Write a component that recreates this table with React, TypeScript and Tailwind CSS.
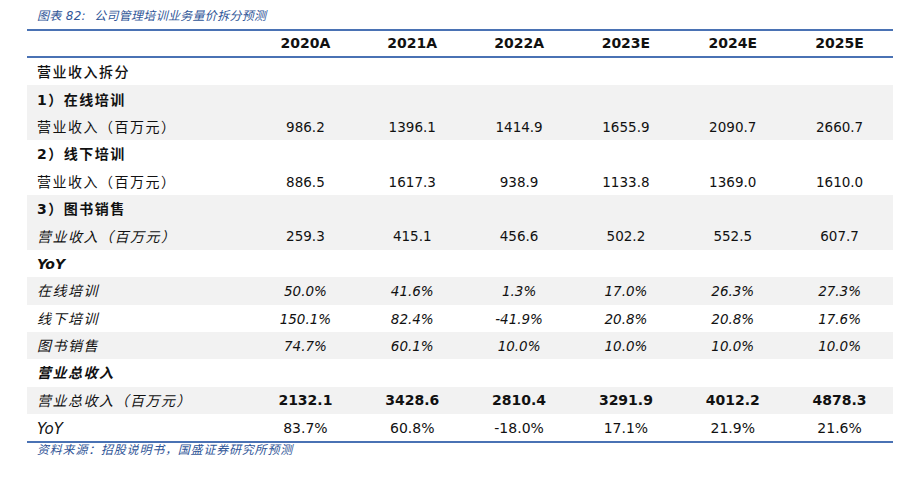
import React from "react";

type Row = {
  label: string;
  values: string[];
  bg: boolean;
  labelCls: string;
  valCls: string;
};

const cjk = '"DejaVu Sans", "Noto Sans CJK SC", sans-serif';

const rows: Row[] = [
  { label: "营业收入拆分", values: ["", "", "", "", "", ""], bg: false, labelCls: "font-medium tracking-[1.5px]", valCls: "" },
  { label: "1）在线培训", values: ["", "", "", "", "", ""], bg: true, labelCls: "font-bold tracking-[1.5px]", valCls: "" },
  { label: "营业收入（百万元）", values: ["986.2", "1396.1", "1414.9", "1655.9", "2090.7", "2660.7"], bg: true, labelCls: "tracking-[1.5px]", valCls: "" },
  { label: "2）线下培训", values: ["", "", "", "", "", ""], bg: false, labelCls: "font-bold tracking-[1.5px]", valCls: "" },
  { label: "营业收入（百万元）", values: ["886.5", "1617.3", "938.9", "1133.8", "1369.0", "1610.0"], bg: false, labelCls: "tracking-[1.5px]", valCls: "" },
  { label: "3）图书销售", values: ["", "", "", "", "", ""], bg: true, labelCls: "font-bold tracking-[1.5px]", valCls: "" },
  { label: "营业收入（百万元）", values: ["259.3", "415.1", "456.6", "502.2", "552.5", "607.7"], bg: true, labelCls: "italic tracking-[1.5px]", valCls: "" },
  { label: "YoY", values: ["", "", "", "", "", ""], bg: false, labelCls: "font-bold italic", valCls: "" },
  { label: "在线培训", values: ["50.0%", "41.6%", "1.3%", "17.0%", "26.3%", "27.3%"], bg: true, labelCls: "italic tracking-[1.5px]", valCls: "italic" },
  { label: "线下培训", values: ["150.1%", "82.4%", "-41.9%", "20.8%", "20.8%", "17.6%"], bg: false, labelCls: "italic tracking-[1.5px]", valCls: "italic" },
  { label: "图书销售", values: ["74.7%", "60.1%", "10.0%", "10.0%", "10.0%", "10.0%"], bg: true, labelCls: "italic tracking-[1.5px]", valCls: "italic" },
  { label: "营业总收入", values: ["", "", "", "", "", ""], bg: false, labelCls: "font-bold italic tracking-[1.5px]", valCls: "" },
  { label: "营业总收入（百万元）", values: ["2132.1", "3428.6", "2810.4", "3291.9", "4012.2", "4878.3"], bg: true, labelCls: "italic tracking-[1.5px]", valCls: "font-bold text-[14px]" },
  { label: "YoY", values: ["83.7%", "60.8%", "-18.0%", "17.1%", "21.9%", "21.6%"], bg: false, labelCls: "italic text-[15px]", valCls: "text-[14px]" },
];

const years = ["2020A", "2021A", "2022A", "2023E", "2024E", "2025E"];

export default function App() {
  return (
    <div className="w-[923px] h-[482px] bg-white text-[#111]" style={{ fontFamily: cjk }}>
      <div className="pl-[37px] pt-[8px] h-[29px] text-[12px] italic text-[#2f5597] tracking-[0.3px] leading-[16px]">
        图表 82:&nbsp; 公司管理培训业务量价拆分预测
      </div>
      <div className="ml-[27px] w-[866px] border-t-2 border-[#4a72b4]">
        <div className="grid grid-cols-[225px_repeat(6,1fr)] h-[27px] items-center border-b-2 border-[#4a72b4]">
          <div />
          {years.map((y) => (
            <div key={y} className="text-center font-bold text-[14px]">
              {y}
            </div>
          ))}
        </div>
        {rows.map((r, i) => (
          <div
            key={i}
            className={`grid grid-cols-[225px_repeat(6,1fr)] h-[27.4px] items-center ${r.bg ? "bg-[#f2f2f2]" : "bg-white"}`}
          >
            <div className={`pl-[10px] pt-[2px] text-[14px] ${r.labelCls}`}>{r.label}</div>
            {r.values.map((v, j) => (
              <div key={j} className={`text-center pt-[1px] text-[13.5px] ${r.valCls}`}>
                {v}
              </div>
            ))}
          </div>
        ))}
        <div className="border-t-2 border-[#4a72b4]" />
      </div>
      <div className="pl-[37px] pt-[0px] text-[12px] italic text-[#2f5597] tracking-[0.8px] leading-[14px]">
        资料来源：招股说明书，国盛证券研究所预测
      </div>
    </div>
  );
}
